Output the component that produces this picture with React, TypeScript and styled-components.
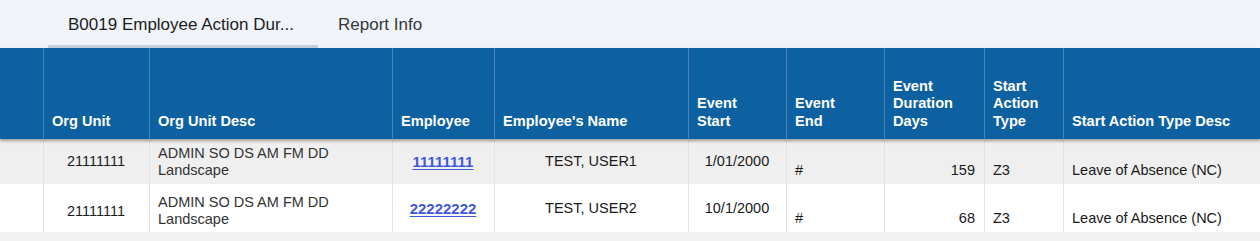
import styled, { createGlobalStyle } from 'styled-components';

const GlobalStyle = createGlobalStyle`
  body {
    margin: 0;
    background: #f2f2f2;
    font-family: "Liberation Sans", Arial, sans-serif;
  }
`;

const COLUMNS = '43px 106px 243px 102px 194px 98px 98px 100px 79px 1fr';

type Align = 'left' | 'center' | 'right';
type VAlign = 'middle' | 'bottom';

const Page = styled.div`
  width: 1260px;
  height: 241px;
  overflow: hidden;
  background: #f2f2f2;
`;

const TabBar = styled.div`
  display: flex;
  height: 48px;
  padding-left: 48px;
  background: #f0f4f8;
  box-sizing: border-box;
`;

const Tab = styled.div<{ $active?: boolean }>`
  display: flex;
  align-items: center;
  padding: 5px 20px 0 20px;
  font-size: 17px;
  color: ${(p) => (p.$active ? '#1c1c1c' : '#34383c')};
  border-bottom: 3px solid ${(p) => (p.$active ? '#c3d1df' : 'transparent')};
  box-sizing: border-box;
  width: ${(p) => (p.$active ? '270px' : 'auto')};
  white-space: nowrap;
`;

const HeaderRow = styled.div`
  display: grid;
  grid-template-columns: ${COLUMNS};
  height: 91px;
  background: #0d61a0;
  box-shadow: 0 2px 3px rgba(0, 0, 0, 0.35);
  position: relative;
  z-index: 1;
`;

const HeaderCell = styled.div`
  display: flex;
  flex-direction: column;
  justify-content: flex-end;
  padding: 0 8px 9px 8px;
  border-left: 1px solid #4a84b8;
  color: #ffffff;
  font-weight: bold;
  font-size: 14.6px;
  line-height: 17.5px;
  white-space: nowrap;
  &:first-child {
    border-left: none;
  }
`;

const BodyRow = styled.div<{ $striped?: boolean; $height: number }>`
  display: grid;
  grid-template-columns: ${COLUMNS};
  height: ${(p) => p.$height}px;
  background: ${(p) => (p.$striped ? '#efefef' : '#ffffff')};
`;

const Cell = styled.div<{ $align?: Align; $valign?: VAlign; $shift?: number }>`
  display: flex;
  flex-direction: column;
  justify-content: ${(p) => (p.$valign === 'bottom' ? 'flex-end' : 'center')};
  align-items: ${(p) =>
    p.$align === 'center' ? 'center' : p.$align === 'right' ? 'flex-end' : 'flex-start'};
  padding: ${(p) => (p.$valign === 'bottom' ? '0 9px 5px 8px' : `${p.$shift ?? 0}px 9px 0 8px`)};
  border-left: 1px solid #e3e3e3;
  color: #1a1a1a;
  font-size: 14.5px;
  line-height: 17px;
  white-space: nowrap;
  &:first-child {
    border-left: none;
  }
`;

const DescText = styled.span`
  color: #333333;
`;

const EmployeeLink = styled.a`
  color: #4159d6;
  font-size: 15px;
  font-weight: bold;
  text-decoration: underline;
  text-underline-offset: 2px;
`;

const headers: string[][] = [
  [],
  ['Org Unit'],
  ['Org Unit Desc'],
  ['Employee'],
  ["Employee's Name"],
  ['Event', 'Start'],
  ['Event', 'End'],
  ['Event', 'Duration', 'Days'],
  ['Start', 'Action', 'Type'],
  ['Start Action Type Desc'],
];

const rows = [
  {
    orgUnit: '21111111',
    desc: ['ADMIN SO DS AM FM DD', 'Landscape'],
    employee: '11111111',
    name: 'TEST, USER1',
    start: '1/01/2000',
    end: '#',
    days: 159,
    type: 'Z3',
    typeDesc: 'Leave of Absence (NC)',
    height: 45,
    shift: 0,
  },
  {
    orgUnit: '21111111',
    desc: ['ADMIN SO DS AM FM DD', 'Landscape'],
    employee: '22222222',
    name: 'TEST, USER2',
    start: '10/1/2000',
    end: '#',
    days: 68,
    type: 'Z3',
    typeDesc: 'Leave of Absence (NC)',
    height: 48,
    shift: 6,
  },
];

export default function App() {
  return (
    <Page>
      <GlobalStyle />
      <TabBar>
        <Tab $active>B0019 Employee Action Dur...</Tab>
        <Tab>Report Info</Tab>
      </TabBar>

      <HeaderRow>
        {headers.map((lines, i) => (
          <HeaderCell key={i}>
            {lines.map((l) => (
              <span key={l}>{l}</span>
            ))}
          </HeaderCell>
        ))}
      </HeaderRow>

      {rows.map((r, i) => (
        <BodyRow key={r.employee} $striped={i % 2 === 0} $height={r.height}>
          <Cell />
          <Cell $align="center" $shift={r.shift}>{r.orgUnit}</Cell>
          <Cell $shift={r.shift}>
            {r.desc.map((line) => (
              <DescText key={line}>{line}</DescText>
            ))}
          </Cell>
          <Cell $align="center">
            <EmployeeLink href="#">{r.employee}</EmployeeLink>
          </Cell>
          <Cell $align="center">{r.name}</Cell>
          <Cell $align="center">{r.start}</Cell>
          <Cell $valign="bottom">{r.end}</Cell>
          <Cell $align="right" $valign="bottom">
            {r.days}
          </Cell>
          <Cell $valign="bottom">{r.type}</Cell>
          <Cell $valign="bottom">{r.typeDesc}</Cell>
        </BodyRow>
      ))}
    </Page>
  );
}
